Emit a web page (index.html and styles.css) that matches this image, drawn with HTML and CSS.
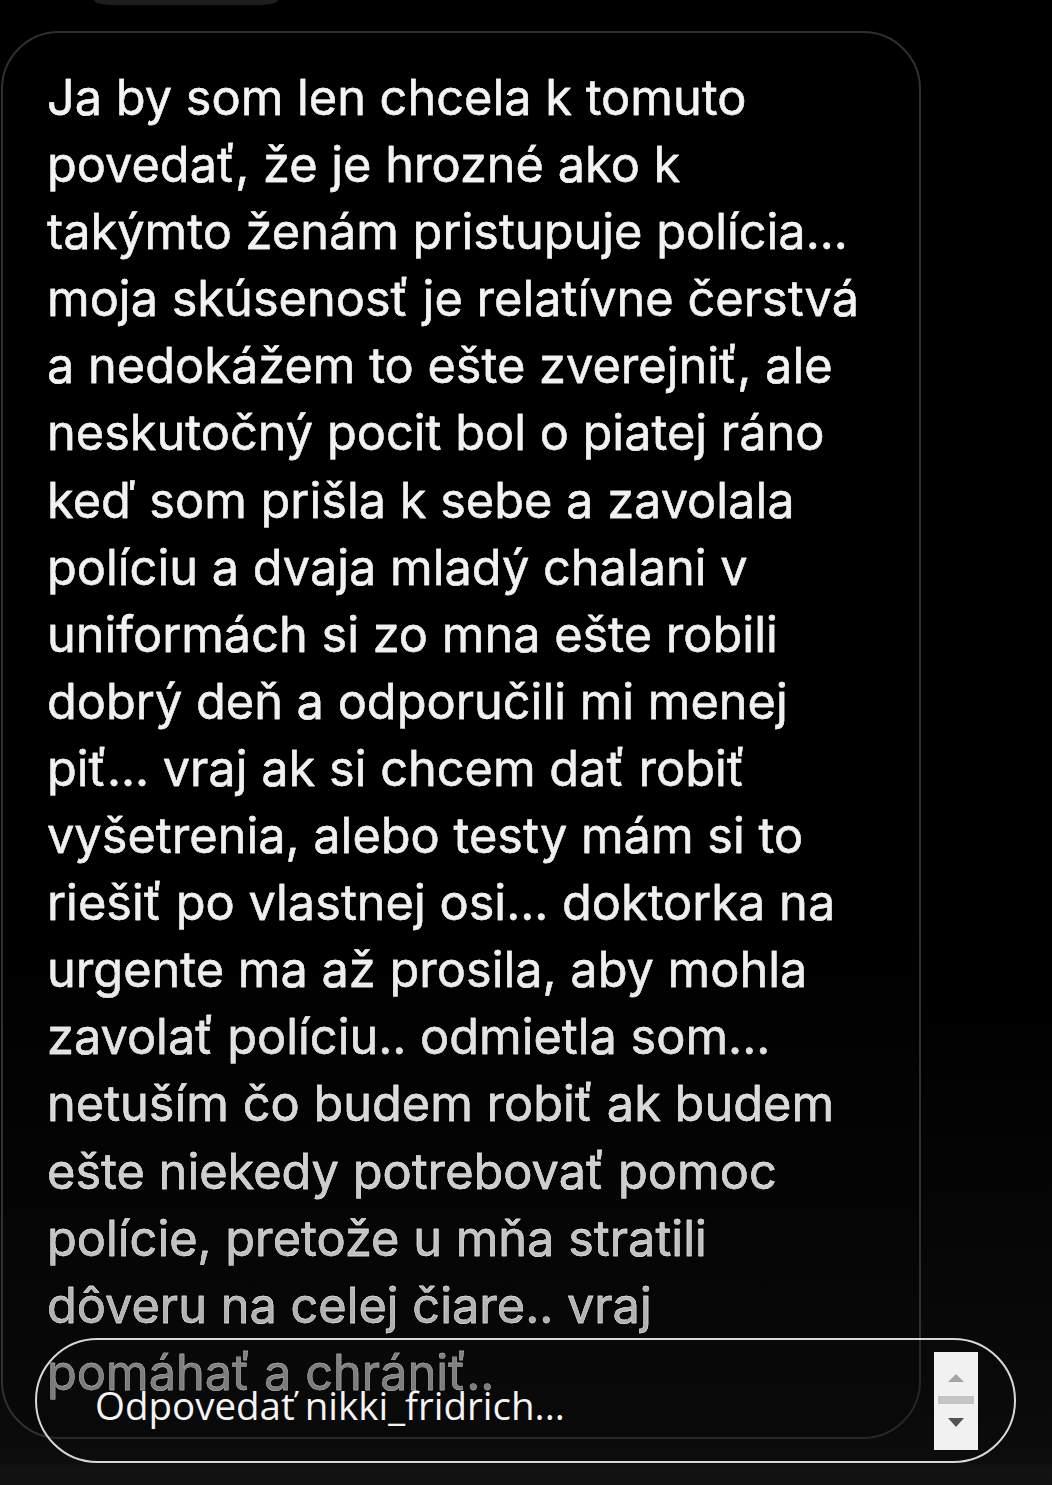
FILE: index.html
```html
<!DOCTYPE html>
<html lang="sk">
<head>
<meta charset="utf-8">
<title>Správa</title>
<link rel="stylesheet" href="styles.css">
</head>
<body>
<div class="screen">
  <div class="prev"></div>
  <div class="bubble">
    <p class="msg">Ja by som len chcela k tomuto<br>povedať, že je hrozné ako k<br>takýmto ženám pristupuje polícia...<br>moja skúsenosť je relatívne čerstvá<br>a nedokážem to ešte zverejniť, ale<br>neskutočný pocit bol o piatej ráno<br>keď som prišla k sebe a zavolala<br>políciu a dvaja mladý chalani v<br>uniformách si zo mna ešte robili<br>dobrý deň a odporučili mi menej<br>piť... vraj ak si chcem dať robiť<br>vyšetrenia, alebo testy mám si to<br>riešiť po vlastnej osi... doktorka na<br>urgente ma až prosila, aby mohla<br>zavolať políciu.. odmietla som...<br>netuším čo budem robiť ak budem<br>ešte niekedy potrebovať pomoc<br>polície, pretože u mňa stratili<br>dôveru na celej čiare.. vraj<br>pomáhať a chrániť..</p>
  </div>
  <div class="reply">
    <span class="placeholder">Odpovedať nikki_fridrich...</span>
    <div class="spin">
      <span class="up"></span>
      <span class="bar"></span>
      <span class="down"></span>
    </div>
  </div>
</div>
</body>
</html>
```
FILE: styles.css
```css
html, body {
  margin: 0;
  padding: 0;
  background: #000;
}
.screen {
  position: relative;
  width: 1052px;
  height: 1485px;
  overflow: hidden;
  background: linear-gradient(to bottom, #000 0, #000 1000px, #0b0b0b 1440px, #0d0d0d 1462px, #131313 1470px, #121212 1485px);
  font-family: Inter, "Noto Sans", sans-serif;
}
.prev {
  width: 184px;
  height: 5px;
  margin-left: 94px;
  background: #1d1d1d;
  border-radius: 0 0 16px 16px / 0 0 5px 5px;
}
.bubble {
  margin-top: 26px;
  margin-left: 1px;
  width: 920px;
  box-sizing: border-box;
  height: 1408px;
  border: 2px solid #303030;
  border-radius: 58px;
  padding: 31px 0 0 44px;
  background: linear-gradient(to bottom, #000 0, #000 900px, #090909 1408px);
}
.msg {
  margin: 0;
  font-size: 48.7px;
  line-height: 67.1px;
  letter-spacing: 0;
  white-space: nowrap;
  -webkit-text-stroke: 0.4px #f2f2f2;
  background: linear-gradient(to bottom, #f4f4f4 0, #efefef 900px, #c8c8c8 1150px, #9e9e9e 1340px);
  -webkit-background-clip: text;
  background-clip: text;
  color: transparent;
}
.reply {
  position: absolute;
  left: 35px;
  top: 1338px;
  width: 981px;
  height: 125px;
  box-sizing: border-box;
  border: 2px solid #d8d8d8;
  border-radius: 63px;
  background: rgba(12, 12, 12, 0.25);
  display: flex;
  align-items: center;
  padding-left: 58px;
}
.placeholder {
  font-family: "Open Sans", "Noto Sans", sans-serif;
  font-size: 38.5px;
  color: #f4f4f4;
  margin-top: 8px;
}
.spin {
  position: absolute;
  left: 897px;
  top: 12px;
  width: 44px;
  height: 98px;
  background: #f1f1f1;
  display: flex;
  flex-direction: column;
  align-items: center;
  padding-top: 22px;
  box-sizing: border-box;
}
.up {
  width: 0;
  height: 0;
  border-left: 8px solid transparent;
  border-right: 8px solid transparent;
  border-bottom: 8px solid #a4a4a4;
}
.bar {
  width: 36px;
  height: 8px;
  background: #c4c4c4;
  margin-top: 14px;
}
.down {
  width: 0;
  height: 0;
  border-left: 8px solid transparent;
  border-right: 8px solid transparent;
  border-top: 9px solid #545454;
  margin-top: 14px;
}
```
